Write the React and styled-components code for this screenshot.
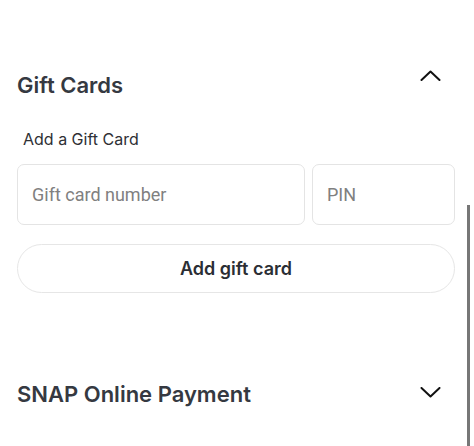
import React from "react";
import styled, { createGlobalStyle } from "styled-components";

const GlobalStyle = createGlobalStyle`
  html, body {
    margin: 0;
    padding: 0;
    background: #ffffff;
  }
  body {
    font-family: Inter, "Noto Sans", sans-serif;
  }
`;

const Page = styled.div`
  position: relative;
  width: 474px;
  height: 446px;
  overflow: hidden;
  box-sizing: border-box;
  padding: 71px 19px 0 17px;
`;

const SectionHeader = styled.div`
  display: flex;
  justify-content: space-between;
  align-items: flex-start;
  margin-top: ${(p) => p.$gap || 0}px;
`;

const SectionTitle = styled.h2`
  margin: 0;
  font-size: 22px;
  line-height: 28px;
  font-weight: 600;
  color: #353941;
`;

const Chevron = styled.svg`
  display: block;
  width: 21px;
  height: 11px;
  margin-right: 14px;
  margin-top: ${(p) => (p.$open ? -1 : 7)}px;
`;

const Label = styled.div`
  margin: 30px 0 0 6px;
  font-size: 16px;
  line-height: 20px;
  color: #2e3035;
`;

const InputRow = styled.div`
  display: flex;
  gap: 7px;
  margin-top: 15px;
`;

const Field = styled.input`
  box-sizing: border-box;
  height: 61px;
  width: ${(p) => p.$width}px;
  flex: none;
  border: 1px solid #e4e4e4;
  border-radius: 7px;
  padding: 0 14px;
  font-family: Roboto, "Liberation Sans", sans-serif;
  font-size: 18px;
  color: #222;
  background: #fff;
  outline: none;

  &::placeholder {
    color: #808080;
  }
`;

const AddButton = styled.button`
  display: block;
  box-sizing: border-box;
  width: 100%;
  height: 49px;
  margin-top: 19px;
  border: 1px solid #e6e6e6;
  border-radius: 25px;
  background: #fff;
  font-family: Inter, "Noto Sans", sans-serif;
  font-size: 18px;
  font-weight: 600;
  color: #2b2e34;
  cursor: pointer;
`;

const ScrollThumb = styled.div`
  position: absolute;
  left: 467px;
  top: 205px;
  bottom: 0;
  width: 3px;
  background: #777777;
`;

function ChevronIcon({ open }) {
  return (
    <Chevron $open={open} viewBox="0 0 21 11" fill="none">
      <path
        d={open ? "M1.5 10 L10.5 1.5 L19.5 10" : "M1.5 1 L10.5 9.5 L19.5 1"}
        stroke="#111"
        strokeWidth="2"
        strokeLinecap="round"
        strokeLinejoin="round"
      />
    </Chevron>
  );
}

export default function App() {
  return (
    <>
      <GlobalStyle />
      <Page>
        <SectionHeader>
          <SectionTitle>Gift Cards</SectionTitle>
          <ChevronIcon open />
        </SectionHeader>
        <Label>Add a Gift Card</Label>
        <InputRow>
          <Field $width={288} placeholder="Gift card number" />
          <Field $width={143} placeholder="PIN" />
        </InputRow>
        <AddButton>Add gift card</AddButton>
        <SectionHeader $gap={87}>
          <SectionTitle>SNAP Online Payment</SectionTitle>
          <ChevronIcon />
        </SectionHeader>
        <ScrollThumb />
      </Page>
    </>
  );
}
